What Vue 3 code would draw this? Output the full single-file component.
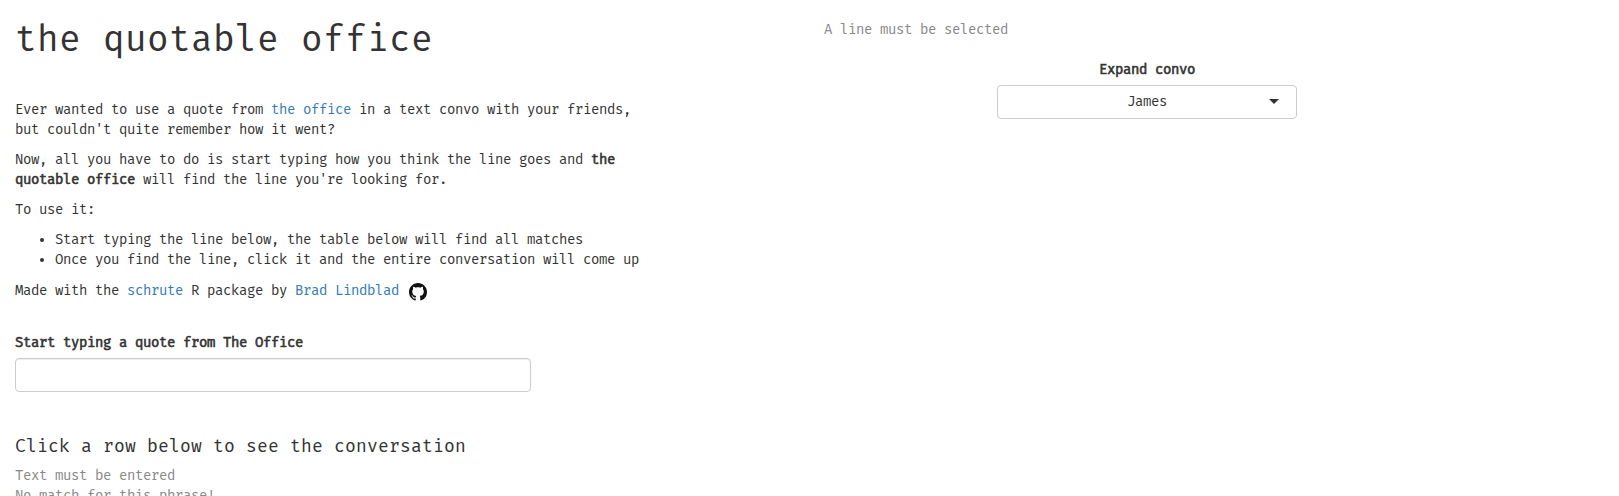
<script setup>
import { ref } from 'vue'

const quote = ref('')
const steps = [
  'Start typing the line below, the table below will find all matches',
  'Once you find the line, click it and the entire conversation will come up',
]
</script>

<template>
  <main class="page">
    <section class="column">
      <h1>the quotable office</h1>
      <div class="intro">
        <p>Ever wanted to use a quote from <a href="#">the office</a> in a text convo with your friends, but couldn't quite remember how it went?</p>
        <p>Now, all you have to do is start typing how you think the line goes and <b>the quotable office</b> will find the line you're looking for.</p>
        <p>To use it:</p>
        <ul>
          <li v-for="step in steps" :key="step">{{ step }}</li>
        </ul>
        <p class="credit">
          <span>Made with the <a href="#">schrute</a> R package by <a href="#">Brad Lindblad</a></span>
          <svg class="github" viewBox="0 0 16 16" aria-label="GitHub">
            <path fill-rule="evenodd" d="M8 0C3.58 0 0 3.58 0 8c0 3.54 2.29 6.53 5.47 7.59.4.07.55-.17.55-.38 0-.19-.01-.82-.01-1.49-2.01.37-2.53-.49-2.69-.94-.09-.23-.48-.94-.82-1.13-.28-.15-.68-.52-.01-.53.63-.01 1.08.58 1.23.82.72 1.21 1.87.87 2.33.66.07-.52.28-.87.51-1.07-1.78-.2-3.64-.89-3.64-3.95 0-.87.31-1.59.82-2.15-.08-.2-.36-1.02.08-2.12 0 0 .67-.21 2.2.82.64-.18 1.32-.27 2-.27s1.36.09 2 .27c1.53-1.04 2.2-.82 2.2-.82.44 1.1.16 1.92.08 2.12.51.56.82 1.27.82 2.15 0 3.07-1.87 3.75-3.65 3.95.29.25.54.73.54 1.48 0 1.07-.01 1.93-.01 2.2 0 .21.15.46.55.38A8.01 8.01 0 0 0 16 8c0-4.42-3.58-8-8-8z" />
          </svg>
        </p>
      </div>
      <label class="field-label" for="quote">Start typing a quote from The Office</label>
      <input id="quote" v-model="quote" class="field" type="text">
      <h3>Click a row below to see the conversation</h3>
      <div class="message">Text must be entered<br>No match for this phrase!</div>
    </section>
    <section class="column right">
      <div class="message">A line must be selected</div>
      <div class="picker">
        <span class="picker-label">Expand convo</span>
        <button class="select" type="button">
          <span>James</span>
          <i class="caret"></i>
        </button>
      </div>
    </section>
  </main>
</template>

<style>
html, body { margin: 0; overflow: hidden; background: #fff; }
</style>

<style scoped>
.page {
  display: grid;
  grid-template-columns: 809px 1fr;
  height: 496px;
  overflow: hidden;
  color: #333;
  font-family: "Fira Mono", "Fira Code", "Noto Sans Mono", "DejaVu Sans Mono", monospace;
  font-size: 14px;
  line-height: 20px;
  letter-spacing: calc(8px - 1ch);
  font-variant-ligatures: none;
}
.column { padding: 0 15px; }
h1, h3 { margin: 0; font-weight: 400; }
h1 {
  padding-top: 19px;
  font-size: 36px;
  line-height: 40px;
  letter-spacing: calc(22px - 1ch);
}
.intro { width: 645px; padding-top: 41px; }
p { margin: 0 0 10px; }
a { color: #337ab7; text-decoration: none; }
b, .field-label, .picker-label {
  font-weight: 400;
  -webkit-text-stroke: 0.6px currentColor;
}
ul { margin: 0 0 10px; padding-left: 40px; }
.credit { display: flex; align-items: center; padding-top: 1px; }
.github { width: 18px; height: 18px; margin: 1px 0 0 10px; fill: #111; }
.field-label { display: block; margin-top: 32px; }
.field {
  display: block;
  box-sizing: border-box;
  width: 516px;
  height: 34px;
  margin-top: 5px;
  padding: 6px 12px;
  border: 1px solid #ccc;
  border-radius: 4px;
  box-shadow: inset 0 1px 1px rgba(0, 0, 0, .075);
  font: inherit;
}
h3 {
  margin-top: 44px;
  font-size: 18px;
  letter-spacing: calc(11px - 1ch);
}
.message { margin-top: 10px; color: #888; }
.right .message { margin-top: 20px; }
.picker { width: 646px; margin-top: 20px; text-align: center; }
.picker-label { display: block; }
.select {
  position: relative;
  width: 300px;
  height: 34px;
  margin: 5px auto 0;
  padding: 0 25px 0 25px;
  border: 1px solid #ccc;
  border-radius: 4px;
  background: #fff;
  color: #333;
  font: inherit;
  letter-spacing: inherit;
}
.caret {
  position: absolute;
  right: 17px;
  top: 13px;
  border: 5px solid transparent;
  border-top-color: #333;
  border-bottom: 0;
}
</style>
